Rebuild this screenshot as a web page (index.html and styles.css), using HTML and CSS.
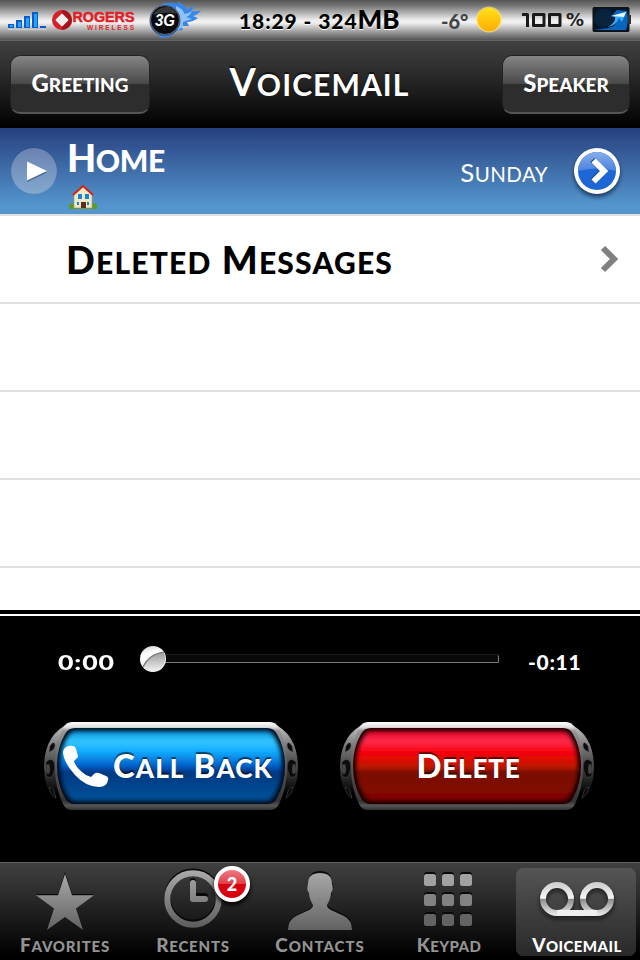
FILE: index.html
```
<!DOCTYPE html>
<html lang="en">
<head>
    <meta charset="UTF-8">
    <title>Voicemail</title>
    <link rel="stylesheet" href="styles.css">
</head>
<body>
    <div class="phone">
        <header class="status">
            <svg class="signal" width="38" height="40" viewBox="0 0 38 40">
                <g fill="#0b5bd0"><path d="M0 24h6v4H0zM8 20h6v8H8zM16 16h6v12h-6zM24 12h6v16h-6zM32 26h6v2h-6z"/></g>
                <g fill="#24a5ee"><path d="M2 25h3v2H2zM10 22h3v5h-3zM18 18h3v9h-3zM26 14h3v13h-3z"/></g>
                <path d="M0 29.500h38" stroke="#ddd" opacity=".6"/>
            </svg>
            <svg class="carrier" width="86" height="40" viewBox="0 0 86 40">
                <circle cx="10" cy="20" r="10" fill="#d71f27"/>
                <path d="M10 10a10 10 0 0 1 0 20z" fill="#a6131b"/>
                <rect x="5.200" y="15.200" width="9.600" height="9.600" rx="1" fill="#eee" transform="rotate(45 10 20)"/>
                <text x="20.500" y="21.500" class="rogers" textLength="62" lengthAdjust="spacingAndGlyphs">ROGERS</text>
                <text x="35" y="29.500" class="wireless" textLength="47">WIRELESS</text>
            </svg>
            <svg class="network" width="52" height="40" viewBox="0 0 52 40">
                <path d="M8 8Q15 0 30 4l-2-3q7 3 10 8 4-1 6-4 1 4-2 6 6 1 10-1-3 5-8 6l5 2q-5 4-11 4l2 4-8 0 2 4-7 1-7 6-9 1z" fill="#3a86e8"/>
                <path d="M27 6q8 3 8 8 4 0 8-3-2 5-6 6l6 2-9 3q1 6-7 9z" fill="#8fc2fa"/>
                <circle cx="16" cy="20.500" r="15.500" fill="#2a5da5"/>
                <circle cx="16" cy="20" r="14.500" fill="#090b0f" stroke="#666"/>
                <path d="M4 15Q9 6 20 7q6 2 8 7-12-3-24 1z" fill="#555" opacity=".6"/>
                <text x="6" y="25.500" class="threeg" textLength="20" lengthAdjust="spacingAndGlyphs">3G</text>
            </svg>
            <div class="clock">18:29 - 324<span>MB</span></div>
            <div class="temp">-6°</div>
            <svg class="sun" width="28" height="40" viewBox="0 0 28 40">
                <circle cx="14" cy="19.500" r="13" fill="#ffe46a" opacity=".7"/>
                <circle cx="14" cy="19.500" r="11.500" fill="url(#sunFill)"/>
            </svg>
            <svg class="percent" width="64" height="40" viewBox="0 0 64 40">
                <g fill="none" stroke="#1a1a1a" stroke-width="3" stroke-linejoin="round"><path d="M0 14.500h5.500V27M11.500 14.500h10.500v11h-10.500zM27.500 14.500h10.500v11h-10.500z"/></g>
                <text x="44" y="26" class="pct" textLength="18" lengthAdjust="spacingAndGlyphs">%</text>
            </svg>
            <svg class="battery" width="40" height="40" viewBox="0 0 40 40">
                <rect x="1" y="7.500" width="36" height="24" rx="1" fill="#071626" stroke="#111"/>
                <path d="M36 15h3v9h-3z" fill="#333"/>
                <path d="M2 30h32q3-8 1-19l-10-1-6 6h5q4 9-8 12z" fill="#0865bd"/>
                <ellipse cx="12" cy="18" rx="10" ry="9.500" fill="#08233d"/>
                <path d="M19 16l15-4-4 10-3-4q-3 8-11 9 8-5 7-10z" fill="#31aaff"/>
                <path d="M19 16l15-4-2 5z" fill="#e6f6ff"/>
            </svg>
        </header>

        <nav class="navbar">
            <button class="nav-btn greeting"><span class="caps"><span>Greeting</span></span></button>
            <h1 class="caps title"><span>Voicemail</span></h1>
            <button class="nav-btn speaker"><span class="caps"><span>Speaker</span></span></button>
        </nav>

        <ul class="list">
            <li class="row selected">
                <svg class="play" width="48" height="48" viewBox="0 0 48 48">
                    <circle cx="24" cy="23.500" r="23" fill="#2c4d86"/>
                    <circle cx="24" cy="24" r="23" fill="url(#playFill)"/>
                    <path d="M17 16l20 9.500L17 35z" fill="#234570" opacity=".6"/>
                    <path d="M17 14.500l20 9.500-20 9.500z" fill="#fff"/>
                </svg>
                <div class="who">
                    <div class="caps name"><span>Home</span></div>
                    <svg class="house" width="28" height="26" viewBox="0 0 28 26">
                        <path d="M0 21q2-3 5-1h18q4-2 5 1v4H0z" fill="#5d9a2b"/>
                        <path d="M5 10l9-8 9 8v14H5z" fill="#efe9c2" stroke="#a59c72" stroke-width=".6"/>
                        <path d="M4 11L14 2l10 9" fill="none" stroke="#d5201d" stroke-width="2"/>
                        <path d="M9 10h4v5H9zM16 10h4v5h-4zM8 18h2v3H8zM18 18h2v3h-2z" fill="#1683d9"/>
                        <path d="M12 18h5v6h-5z" fill="#5d2b16"/>
                    </svg>
                </div>
                <div class="caps day"><span>Sunday</span></div>
                <svg class="detail" width="56" height="60" viewBox="0 0 56 60">
                    <circle cx="28" cy="31" r="23" fill="#0a2545" filter="url(#soft)" opacity=".8"/>
                    <circle cx="28" cy="28" r="23" fill="#fff"/>
                    <circle cx="28" cy="28" r="19" fill="#1c66d6"/>
                    <path d="M9 28a19 19 0 0 1 38 0q-19-5-38 0z" fill="url(#gloss)"/>
                    <path d="M23.500 17l10.500 10.500L23.500 38" fill="none" stroke="#104395" stroke-width="6"/>
                    <path d="M24.500 17.500L35 28 24.500 38.500" fill="none" stroke="#fff" stroke-width="6"/>
                </svg>
            </li>
            <li class="row">
                <div class="caps deleted"><span>Deleted</span> <span>Messages</span></div>
                <svg class="chevron" width="20" height="28" viewBox="0 0 20 28"><path d="M3 3l11 11L3 25" fill="none" stroke="#808080" stroke-width="6"/></svg>
            </li>
            <li class="row"></li>
            <li class="row"></li>
            <li class="row"></li>
            <li class="row last"></li>
        </ul>

        <section class="player">
            <div class="scrubber">
                <div class="time"><span>0:00</span></div>
                <svg class="slider" width="362" height="32" viewBox="0 0 362 32">
                    <rect x="14" y="11.500" width="344" height="8" fill="#090909" stroke="#1d1d1d"/>
                    <path d="M14 19.500h344.500v-7" fill="none" stroke="#777"/>
                    <circle cx="13" cy="16" r="13" fill="url(#knob)"/>
                    <path d="M3 24Q9 11 24 9q3 9-2 15Q12 33 3 24z" fill="url(#knobLow)"/>
                    <path d="M3 24Q9 11 24 9" fill="none" stroke="#777" stroke-width="1.200"/>
                </svg>
                <div class="time left">-0:11</div>
            </div>
            <div class="actions">
                <button class="big">
                    <svg width="254" height="88" viewBox="0 0 254 88">
                        <use href="#frame"/>
                        <path d="M31 6h192q7 0 10 6 8 14 8 32t-8 32q-3 6-10 6H31q-7 0-10-6-8-14-8-32t8-32q3-6 10-6z" fill="#020a18"/>
                        <path d="M32 9h190q5 0 8 5 8 12 8 30t-8 30q-3 5-8 5H32q-5 0-8-5-8-12-8-30t8-30q3-5 8-5z" fill="url(#blue)" filter="url(#edge)"/>
                    </svg>
                    <div class="face">
                        <svg class="handset" width="46" height="44" viewBox="0 0 46 44"><path d="M3 2Q6 0 10 1q2 0 3 3l2 7q0 2-2 3l-2 2q1 5 8 11 4 4 9 5l3-3q2-2 5-1l7 3q3 1 2 4-1 7-9 7-13 0-24-12Q1 18 0 8q0-4 3-6z" fill="#fff"/></svg>
                        <span class="caps callback"><span>Call</span> <span>Back</span></span>
                    </div>
                </button>
                <button class="big">
                    <svg width="254" height="88" viewBox="0 0 254 88">
                        <use href="#frame"/>
                        <path d="M31 6h192q7 0 10 6 8 14 8 32t-8 32q-3 6-10 6H31q-7 0-10-6-8-14-8-32t8-32q3-6 10-6z" fill="#160000"/>
                        <path d="M32 9h190q5 0 8 5 8 12 8 30t-8 30q-3 5-8 5H32q-5 0-8-5-8-12-8-30t8-30q3-5 8-5z" fill="url(#red)" filter="url(#edge)"/>
                    </svg>
                    <div class="face center"><span class="caps delete"><span>Delete</span></span></div>
                </button>
            </div>
        </section>

        <footer class="tabs">
            <div class="tab">
                <svg width="120" height="66" viewBox="0 0 120 66">
                    <path d="M61 4l7 22h22L72 40l7 22-18-13-18 13 7-22-18-14h22z" fill="#0a0a0a"/>
                    <path d="M61 6l7 21.300h22L72 40.500 79 62 61 49 43 62l7-21.500L32 27.300h22z" fill="url(#grey)"/>
                </svg>
                <div class="caps favorites"><span>Favorites</span></div>
            </div>
            <div class="tab">
                <svg width="120" height="66" viewBox="0 0 120 66">
                    <g fill="none" stroke="#0a0a0a"><circle cx="61" cy="29" r="25.500" stroke-width="6"/><path d="M61 13v15h12" stroke-width="6" stroke-linecap="round"/></g>
                    <g fill="none" stroke="url(#greyLine)"><circle cx="61" cy="31" r="25.700" stroke-width="6"/><path d="M61 15v16h12" stroke-width="6" stroke-linecap="round" stroke-linejoin="round"/></g>
                </svg>
                <div class="caps recents"><span>Recents</span></div>
                <div class="badge">2</div>
            </div>
            <div class="tab">
                <svg width="120" height="66" viewBox="0 0 120 66">
                    <path d="M28 60q0-9 8-13l13-6q4-2 4-5-4-7-4-13-3-4 0-9 0-11 11-11t12 11q3 5 0 9 0 6-5 13 1 3 5 5l13 6q7 4 7 13z" fill="#0a0a0a"/>
                    <path d="M28 62q0-10 8-14l13-6q4-2 4-5-4-7-4-12-3-4-1-9 0-11 12-11t12 11q2 5-1 9 0 5-4 12 0 3 4 5l13 6q8 4 8 14z" fill="url(#grey)"/>
                </svg>
                <div class="caps contacts"><span>Contacts</span></div>
            </div>
            <div class="tab">
                <svg width="120" height="66" viewBox="0 0 120 66">
                    <g fill="#0a0a0a"><rect x="36" y="4" width="12" height="12" rx="3"/><rect x="54" y="4" width="12" height="12" rx="3"/><rect x="72" y="4" width="12" height="12" rx="3"/><rect x="36" y="24" width="12" height="12" rx="3"/><rect x="54" y="24" width="12" height="12" rx="3"/><rect x="72" y="24" width="12" height="12" rx="3"/><rect x="36" y="44" width="12" height="12" rx="3"/><rect x="54" y="44" width="12" height="12" rx="3"/><rect x="72" y="44" width="12" height="12" rx="3"/></g>
                    <g fill="#a2a2a2"><rect x="36" y="6" width="12" height="12" rx="2.500"/><rect x="54" y="6" width="12" height="12" rx="2.500"/><rect x="72" y="6" width="12" height="12" rx="2.500"/></g>
                    <g fill="#828282"><rect x="36" y="26" width="12" height="12" rx="2.500"/><rect x="54" y="26" width="12" height="12" rx="2.500"/><rect x="72" y="26" width="12" height="12" rx="2.500"/></g>
                    <g fill="#636363"><rect x="36" y="46" width="12" height="12" rx="2.500"/><rect x="54" y="46" width="12" height="12" rx="2.500"/><rect x="72" y="46" width="12" height="12" rx="2.500"/></g>
                </svg>
                <div class="caps keypad"><span>Keypad</span></div>
            </div>
            <div class="tab active">
                <svg width="120" height="66" viewBox="0 0 120 66">
                    <g fill="none" stroke="#111" stroke-width="6" filter="url(#soft)" opacity=".7"><circle cx="41" cy="34" r="14"/><circle cx="81" cy="34" r="14"/><path d="M41 48h40"/></g>
                    <g fill="none" stroke="url(#silver)" stroke-width="6"><circle cx="41" cy="31" r="14"/><circle cx="81" cy="31" r="14"/></g>
                    <path d="M41 45h40" stroke="#efefef" stroke-width="6"/>
                </svg>
                <div class="caps voicemail"><span>Voicemail</span></div>
            </div>
        </footer>
    </div>

    <svg class="defs" width="0" height="0">
        <defs>
            <linearGradient id="sunFill" x2="0" y2="1"><stop stop-color="#ffe11a"/><stop offset="1" stop-color="#ffad00"/></linearGradient>
            <linearGradient id="playFill" x2="0" y2="1"><stop stop-color="#6a82b0"/><stop offset="1" stop-color="#82a9cf"/></linearGradient>
            <linearGradient id="gloss" x2="0" y2="1"><stop stop-color="#86aeea"/><stop offset="1" stop-color="#4a83de"/></linearGradient>
            <linearGradient id="grey" x2="0" y2="1"><stop stop-color="#a8a8a8"/><stop offset="1" stop-color="#626262"/></linearGradient>
            <linearGradient id="greyLine" gradientUnits="userSpaceOnUse" x1="0" y1="2" x2="0" y2="60"><stop stop-color="#ababab"/><stop offset="1" stop-color="#5c5c5c"/></linearGradient>
            <linearGradient id="silver" gradientUnits="userSpaceOnUse" x1="0" y1="14" x2="0" y2="48"><stop stop-color="#ccc"/><stop offset=".48" stop-color="#f6f6f6"/><stop offset=".5" stop-color="#8c8c8c"/><stop offset="1" stop-color="#eee"/></linearGradient>
            <linearGradient id="knob" x2=".3" y2="1"><stop stop-color="#ccc"/><stop offset=".35" stop-color="#fff"/><stop offset="1" stop-color="#eee"/></linearGradient>
            <linearGradient id="knobLow" x2="0" y2="1"><stop stop-color="#9a9a9a"/><stop offset="1" stop-color="#f2f2f2"/></linearGradient>
            <linearGradient id="metal" x2="0" y2="1"><stop stop-color="#fff"/><stop offset=".06" stop-color="#ddd"/><stop offset=".1" stop-color="#999"/><stop offset=".4" stop-color="#666"/><stop offset=".9" stop-color="#333"/><stop offset=".95" stop-color="#555"/><stop offset="1" stop-color="#333"/></linearGradient>
            <linearGradient id="side" x2="0" y2="1"><stop stop-color="#ccc"/><stop offset=".3" stop-color="#777"/><stop offset=".65" stop-color="#303030"/><stop offset=".9" stop-color="#000"/></linearGradient>
            <linearGradient id="blue" x2="0" y2="1"><stop stop-color="#008fd8"/><stop offset=".14" stop-color="#35c7ff"/><stop offset=".3" stop-color="#10aaff"/><stop offset=".54" stop-color="#0050bb"/><stop offset=".56" stop-color="#003780"/><stop offset="1" stop-color="#00529a"/></linearGradient>
            <linearGradient id="red" x2="0" y2="1"><stop stop-color="#e00022"/><stop offset=".14" stop-color="#ff2d4f"/><stop offset=".3" stop-color="#f8000d"/><stop offset=".41" stop-color="#dc0e00"/><stop offset=".54" stop-color="#b51900"/><stop offset=".56" stop-color="#781000"/><stop offset="1" stop-color="#850300"/></linearGradient>
            <filter id="soft" x="-20%" y="-20%" width="140%" height="150%"><feGaussianBlur stdDeviation="2"/></filter>
            <filter id="edge"><feGaussianBlur stdDeviation="2"/></filter>
            <g id="frame">
                <path d="M26 1Q0 12 0 46q0 20 12 34h230q12-14 12-34 0-34-26-45z" fill="url(#side)"/>
                <g id="holes">
                    <path d="M6 24q4-6 5-1 0 5-6 7zM2 40q5-5 8 0 2 6-1 13-3 5-7 0zM5 65q4 0 6 7l1 4q-6-3-7-11z" fill="#0c0c0c" stroke="#555" stroke-width=".5"/>
                    <ellipse cx="4" cy="47" rx="2" ry="5" fill="#444"/>
                </g>
                <use href="#holes" transform="matrix(-1 0 0 1 254 0)"/>
                <path d="M28 0h198q6 0 9 6 8 16 8 38t-8 38q-3 6-9 6H28q-6 0-9-6-8-16-8-38t8-38q3-6 9-6z" fill="url(#metal)"/>
            </g>
        </defs>
    </svg>
</body>
</html>
```
FILE: styles.css
```
*{
    box-sizing:border-box;
}
body{
    margin:0;
    background:#000;
    font-family:Lato, "Open Sans", sans-serif;
    font-weight:900;
    color:#fff;
}
button{
    padding:0;
    border:0;
    background:none;
    color:inherit;
    font:inherit;
}
svg{
    display:block;
    flex:none;
    overflow:visible;
}
.defs{
    position:absolute;
}
.phone{
    width:640px;
    height:960px;
    overflow:hidden;
    display:flex;
    flex-direction:column;
}

/* large first letter, small capitals after it */
.caps{
    display:block;
    margin:0;
    line-height:1;
    white-space:nowrap;
}
.caps > span{
    display:inline-block;
    font-size:.79em;
    text-transform:uppercase;
}
.caps > span::first-letter{
    font-size:1.26em;
}

/* status bar */
.status{
    height:40px;
    display:grid;
    grid-template-columns:44px 97px 90px 202px 34px 47px 70px 40px;
    padding-left:8px;
    background:linear-gradient(#555 0, #777 15%, #eee 50%, #f2f2f2 56%, #777 90%, #555 100%);
    color:#000;
    line-height:39px;
    white-space:nowrap;
}
.rogers{
    font:bold 14px "Liberation Sans", sans-serif;
    fill:#e01f28;
    stroke:#e01f28;
    stroke-width:.5px;
}
.wireless{
    font:bold 6.5px "Liberation Sans", sans-serif;
    fill:#e01f28;
}
.threeg{
    font:italic bold 16px "Liberation Sans", sans-serif;
    fill:#fff;
}
.pct{
    font:bold 17px "DejaVu Sans", sans-serif;
    fill:#222;
}
.clock{
    font-size:21px;
    letter-spacing:.9px;
    text-shadow:0 1px 0 #fff;
}
.clock span{
    font-size:26px;
    letter-spacing:0;
}
.temp{
    font-size:20px;
    color:#444;
    line-height:42px;
}

/* title bar */
.navbar{
    height:88px;
    padding:14px 10px 0;
    border-top:1px solid #666;
    display:flex;
    justify-content:space-between;
    align-items:flex-start;
    background:linear-gradient(#404040, #303030 30%, #000);
    text-shadow:0 -2px 1px rgba(0,0,0,.6);
}
.title{
    font-size:38px;
    padding-top:7px;
    margin-right:13px;
    letter-spacing:1.1px;
}
.nav-btn{
    height:59px;
    padding-bottom:2px;
    border-radius:10px;
    border:1px solid #222;
    border-bottom:2px solid #555;
    background:linear-gradient(#858585, #484848 50%, #2d2d2d 51%, #2d2d2d);
    font-size:24px;
}
.nav-btn .caps{
    text-align:center;
}
.greeting{
    width:140px;
}
.speaker{
    width:128px;
}

/* message list */
.list{
    height:482px;
    margin:0;
    padding:0;
    list-style:none;
    background:#fff;
    color:#000;
}
.row{
    height:88px;
    display:flex;
    align-items:center;
    border-bottom:2px solid #e0e0e0;
}
.row.last{
    height:42px;
    border:0;
}
.row.selected{
    padding-left:10px;
    background:linear-gradient(#27407f, #5495cd 90%);
    color:#fff;
}
.who{
    height:86px;
    padding:10px 0 0 9px;
    flex:1;
}
.name{
    font-size:38px;
    letter-spacing:-.4px;
}
.house{
    margin:7px 0 0 2px;
}
.day{
    font-size:26px;
    font-weight:400;
    margin-right:21px;
    padding-top:3px;
    letter-spacing:.4px;
}
.detail{
    margin:4px 15px 0 0;
}
.deleted{
    flex:1;
    padding-left:66px;
    font-size:38px;
    letter-spacing:1.2px;
}
.chevron{
    margin-right:20px;
}

/* playback panel */
.player{
    height:252px;
    border-top:4px solid #000;
    background:#000;
}
.scrubber{
    height:86px;
    border-top:2px solid #fff;
    padding:2px 0 0 58px;
    display:flex;
    align-items:center;
}
.time{
    width:82px;
    font-size:21px;
    padding-top:4px;
    letter-spacing:.7px;
}
.time span{
    display:inline-block;
    transform:scaleX(1.27);
    transform-origin:0 0;
}
.time.left{
    padding-left:26px;
}
.actions{
    display:flex;
    gap:42px;
    padding:22px 0 0 44px;
}
.big{
    display:grid;
    width:254px;
    height:88px;
}
.big > *{
    grid-area:1 / 1;
}
.face{
    display:flex;
    align-items:center;
    padding:0 0 1px 19px;
    font-size:33px;
    text-shadow:0 -2px 1px rgba(0,0,0,.6);
    z-index:1;
}
.face.center{
    justify-content:center;
    padding-left:3px;
}
.handset{
    margin:3px 4px 0 0;
}
.callback{
    letter-spacing:1.1px;
}
.delete{
    letter-spacing:.8px;
}

/* tab bar */
.tabs{
    height:98px;
    display:flex;
    border-top:1px solid #606060;
    background:linear-gradient(#404040, #2d2d2d 30%, #000 95%);
}
.tab{
    position:relative;
    width:120px;
    height:88px;
    margin:5px 4px;
    border-radius:7px;
    color:#949494;
    font-size:19px;
    text-align:center;
}
.tab .caps{
    padding:1px 0 0 2px;
    letter-spacing:.8px;
}
.tab .contacts{
    padding-left:0;
    letter-spacing:1px;
}
.tab .keypad,
.tab .voicemail{
    letter-spacing:.4px;
}
.tab.active{
    background:linear-gradient(#555, #292929);
    color:#fff;
}
.badge{
    position:absolute;
    left:82px;
    top:-2px;
    width:36px;
    height:36px;
    border:4px solid #fff;
    border-radius:50%;
    background:linear-gradient(#ee7880, #e2414b 48%, #d9000f 52%);
    box-shadow:0 3px 4px #000;
    color:#fff;
    font-size:18px;
    line-height:28px;
}
```
